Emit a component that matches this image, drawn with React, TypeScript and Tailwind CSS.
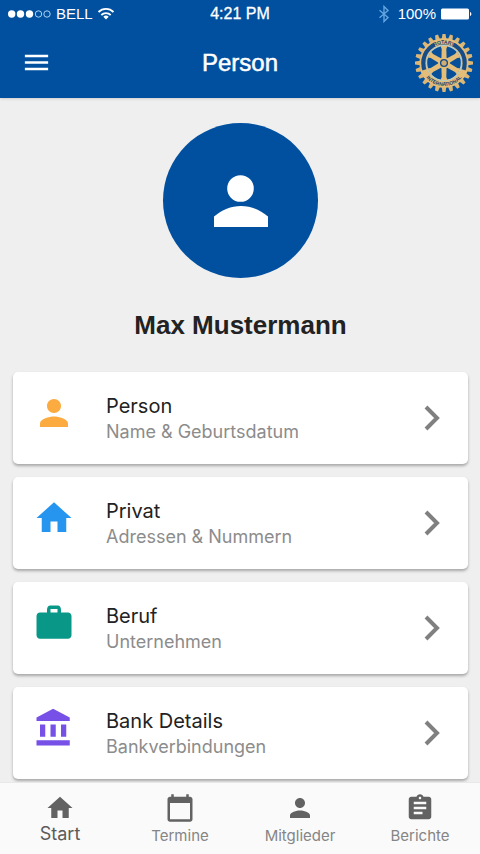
import React from 'react';

const icons = {
  person: 'M12 12c2.21 0 4-1.79 4-4s-1.79-4-4-4-4 1.79-4 4 1.79 4 4 4zm0 2c-2.67 0-8 1.34-8 4v2h16v-2c0-2.66-5.33-4-8-4z',
  home: 'M10 20v-6h4v6h5v-8h3L12 3 2 12h3v8z',
  bank: 'M4 10v7h3v-7H4zm6 0v7h3v-7h-3zM2 22h19v-3H2v3zm14-12v7h3v-7h-3zm-4.500-9L2 6v2h19V6l-9.500-5z',
  work: 'M20 6h-4V4.500C16 3.100 15.400 2 14 2h-4C8.600 2 8 3.100 8 4.500V6H4c-1.110 0-2 .89-2 2v11c0 1.110.89 2 2 2h16c1.110 0 2-.89 2-2V8c0-1.110-.89-2-2-2zm-6 0h-4V4h4v2z',
  menu: 'M3 18h18v-2H3v2zm0-5h18v-2H3v2zm0-7v2h18V6H3z',
  calendar: 'M20 3h-1V1h-2v2H7V1H5v2H4c-1.100 0-2 .9-2 2v16c0 1.100.9 2 2 2h16c1.100 0 2-.9 2-2V5c0-1.100-.9-2-2-2zm0 18H4V8h16v13z',
  clipboard:
    'M19 3h-4.180C14.400 1.840 13.300 1 12 1c-1.300 0-2.400.84-2.820 2H5c-1.100 0-2 .9-2 2v14c0 1.100.9 2 2 2h14c1.100 0 2-.9 2-2V5c0-1.100-.9-2-2-2zm-7 0c.55 0 1 .45 1 1s-.45 1-1 1-1-.45-1-1 .45-1 1-1zm2 14H7v-2h7v2zm3-4H7v-2h10v2zm0-4H7V7h10v2z',
};

type IconName = keyof typeof icons;

const Icon = ({ name, className }: { name: IconName; className: string }) => (
  <svg viewBox="0 0 24 24" fill="currentColor" aria-hidden="true" className={className}>
    <path d={icons[name]} />
  </svg>
);

const entries: { title: string; subtitle: string; icon: IconName; color: string }[] = [
  { title: 'Person', subtitle: 'Name & Geburtsdatum', icon: 'person', color: 'text-[#fbab40]' },
  { title: 'Privat', subtitle: 'Adressen & Nummern', icon: 'home', color: 'text-[#2595f0]' },
  { title: 'Beruf', subtitle: 'Unternehmen', icon: 'work', color: 'text-[#099887]' },
  { title: 'Bank Details', subtitle: 'Bankverbindungen', icon: 'bank', color: 'text-[#7750e8]' },
];

const tabs: { label: string; icon: IconName }[] = [
  { label: 'Start', icon: 'home' },
  { label: 'Termine', icon: 'calendar' },
  { label: 'Mitglieder', icon: 'person' },
  { label: 'Berichte', icon: 'clipboard' },
];

const StatusBar = () => (
  <div className="grid h-[27px] grid-cols-3 items-center px-2 text-[15px] leading-none">
    <div className="flex items-center gap-1">
      <svg viewBox="0 0 44 10" className="h-[10px] w-11" aria-hidden="true">
        <g fill="white">
          <circle cx="3.700" cy="5" r="3.700" />
          <circle cx="12.500" cy="5" r="3.700" />
          <circle cx="21.500" cy="5" r="3.700" />
        </g>
        <g fill="none" stroke="#a9d4f5" strokeWidth="1">
          <circle cx="30.500" cy="5" r="3.200" />
          <circle cx="39" cy="5" r="3.200" />
        </g>
      </svg>
      <span>BELL</span>
      <svg viewBox="0 0 18 13" className="h-[13px] w-[18px]" aria-hidden="true">
        <g fill="none" stroke="white" strokeWidth="1.800">
          <path d="M1.500 5a10.500 10.500 0 0 1 15 0" />
          <path d="M4.300 8a6.600 6.600 0 0 1 9.400 0" />
        </g>
        <path d="M9 12.500 6.300 9.800a3.900 3.900 0 0 1 5.400 0z" fill="white" />
      </svg>
    </div>
    <div className="text-center text-base leading-none [-webkit-text-stroke:0.3px_white]">4:21 PM</div>
    <div className="flex items-center justify-end">
      <svg viewBox="0 0 12 18" className="mr-2 h-[18px] w-3" fill="none" stroke="#64a5df" strokeWidth="1.400" aria-hidden="true">
        <path d="M1.500 5.200 10 12.500 6 16.500V1.500l4 4-8.500 7.300" />
      </svg>
      <span>100%</span>
      <svg viewBox="0 0 32 12" className="ml-1 h-3 w-8" fill="white" aria-hidden="true">
        <rect x="1" y="0.500" width="28" height="11" rx="1.500" />
        <path d="M30 4c1.800.3 1.800 3.700 0 4z" />
      </svg>
    </div>
  </div>
);

const WheelLogo = () => (
  <svg viewBox="-30 -30 60 60" className="size-[60px]" role="img" aria-label="Rotary International">
    <defs>
      <path id="rim-top" d="M-19.300 0a19.300 19.300 0 0 1 38.600 0" />
      <path id="rim-bottom" d="M-23 0a23 23 0 0 0 46 0" />
    </defs>
    <g fill="#dcb675">
      {Array.from({ length: 24 }, (_, i) => (
        <path key={i} d="M-2.300-24-1.500-29h3L2.300-24z" transform={`rotate(${i * 15})`} />
      ))}
    </g>
    <circle r="24.600" fill="#e4bd79" />
    <circle r="20.700" fill="none" stroke="#164d88" strokeWidth="4.200" />
    <g fill="#e4bd79">
      <path d="M-11.500-22A24.800 24.800 0 0 1 11.500-22L8.700-16.800A19 19 0 0 0-8.700-16.800z" />
      <path d="M-23.300 8A24.600 24.600 0 0 0 23.300 8L17 6A18 18 0 0 1-17 6z" />
    </g>
    <circle r="17.400" fill="#075099" stroke="#b9d0cb" strokeWidth="1.200" />
    <g fill="#e4bd79">
      {[0, 60, 120, 180, 240, 300].map((angle) => (
        <path key={angle} d="M-2.600-4-2.300-14-3.400-17h6.800L2.300-14 2.600-4z" transform={`rotate(${angle})`} />
      ))}
      <circle r="5.800" />
    </g>
    <circle r="3.400" fill="#d0ad72" stroke="#164d88" strokeWidth="1.300" />
    <g fill="#173f70" fontFamily="Liberation Sans, sans-serif" fontWeight="bold" fontSize="5" textAnchor="middle">
      <text>
        <textPath href="#rim-top" startOffset="50%">ROTARY</textPath>
      </text>
      <text>
        <textPath href="#rim-bottom" startOffset="50%">INTERNATIONAL</textPath>
      </text>
    </g>
  </svg>
);

const Header = () => (
  <header className="bg-[#0150a0] font-['Liberation_Sans',sans-serif] text-white shadow-sm">
    <StatusBar />
    <div className="grid h-[71px] grid-cols-3 items-center px-[6px]">
      <button type="button" aria-label="Menü" className="ml-[15px] justify-self-start">
        <Icon name="menu" className="size-[31px]" />
      </button>
      <h1 className="text-center text-2xl [-webkit-text-stroke:0.5px_white]">Person</h1>
      <div className="justify-self-end">
        <WheelLogo />
      </div>
    </div>
  </header>
);

const Profile = () => (
  <section className="flex flex-col items-center">
    <div className="flex size-[155px] items-center justify-center rounded-full bg-[#0150a0]">
      <svg viewBox="0 0 54 52" className="h-[52px] w-[54px]" fill="white" aria-hidden="true">
        <circle cx="26.500" cy="13.500" r="13.300" />
        <path d="M0 52V41.500C8 35 17 31 27 31s19 4 27 10.500V52z" />
      </svg>
    </div>
    <h2 className="mt-7 font-['Liberation_Sans',sans-serif] text-[26px] leading-[38px] font-bold text-[#222]">
      Max Mustermann
    </h2>
  </section>
);

const App = () => {
  return (
    <div className="flex min-h-screen flex-col bg-[#efefef] font-['Inter',sans-serif]">
      <Header />
      <main className="flex-1 pt-[25px] pr-3 pb-[3px] pl-[13px]">
        <Profile />
        <ul className="mt-7 flex flex-col gap-[13px]">
          {entries.map((entry) => (
            <li key={entry.title}>
              <button
                type="button"
                className="flex h-[92px] w-full items-center rounded-[5px] bg-white pr-7 pl-5 text-left shadow-[0_2px_3px_rgba(0,0,0,0.3)]"
              >
                <Icon name={entry.icon} className={`mt-5 size-[42px] self-start ${entry.color}`} />
                <span className="ml-[31px] flex flex-1 flex-col pt-[2px]">
                  <span className="text-xl leading-[26px] text-[#222]">{entry.title}</span>
                  <span className="text-lg leading-[26px] text-[#8c8c8c]">{entry.subtitle}</span>
                </span>
                <svg viewBox="0 0 16 26" className="h-[26px] w-4 text-[#808080]" aria-hidden="true">
                  <path d="M2 2l11 11L2 24" fill="none" stroke="currentColor" strokeWidth="4" />
                </svg>
              </button>
            </li>
          ))}
        </ul>
      </main>
      <nav className="sticky bottom-0 grid h-[72px] grid-cols-4 border-t border-[#e8e8e8] bg-[#fafafa]">
        {tabs.map((tab, i) => (
          <a
            key={tab.label}
            href="#"
            aria-current={i === 0 ? 'page' : undefined}
            className={`flex flex-col items-center pt-[10px] ${i === 0 ? 'text-[#5c5c5c]' : 'text-[#858585]'}`}
          >
            <Icon name={tab.icon} className="size-[30px] text-[#626262]" />
            <span className={i === 0 ? 'text-lg leading-[22px]' : 'text-[15px] leading-[26px]'}>{tab.label}</span>
          </a>
        ))}
      </nav>
    </div>
  );
};

export default App;
